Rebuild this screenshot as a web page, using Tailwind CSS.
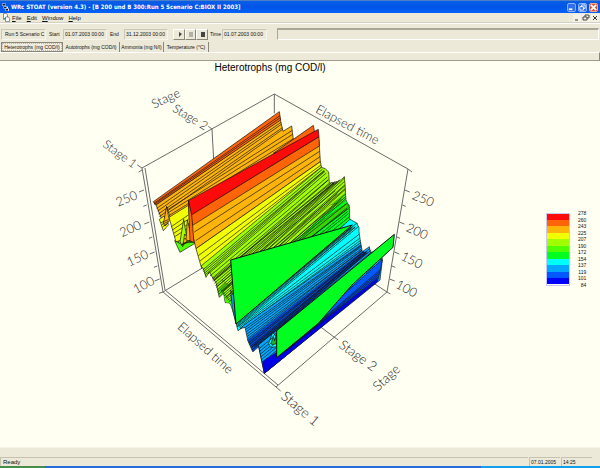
<!DOCTYPE html>
<html lang="en">
<head>
    <meta charset="UTF-8">
    <meta name="viewport" content="width=device-width, initial-scale=1.0">
    <title>WRc STOAT (version 4.3)</title>
    <script src="https://cdn.jsdelivr.net/npm/@tailwindcss/browser@4"></script>
</head>
<body class="h-screen flex flex-col overflow-hidden bg-[#ece9d8] font-['Liberation_Sans',sans-serif] text-[5px] leading-[8px] text-[#111]">

    <!-- Title bar -->
    <header class="h-[13px] shrink-0 flex items-center gap-[2px] px-[2px] border-t border-[#4d7fc4] bg-linear-to-b from-[#0a5fe8] via-[#0054e6] to-[#0862fa]">
        <svg class="w-[7px] h-[8px]" viewBox="0 0 14 16">
            <path d="M0 1h8v5H0z" fill="#ddd"/><path d="M1 2h6v3H1z" fill="#123"/>
            <path d="M3 7h9v4H3z" fill="#f4f4f4"/><path d="M4 8h5v2H4z" fill="#222"/>
            <path d="M7 11h7v5H7z" fill="#ddd"/><path d="M8 12h4v3H8z" fill="#111"/>
        </svg>
        <h1 class="flex-1 font-['DejaVu_Sans_Condensed','Open_Sans',sans-serif] font-bold text-[6px] text-white whitespace-nowrap">WRc STOAT (version 4.3) - [B 200 und B 300:Run 5 Scenario C:BIOX II 2003]</h1>
        <div class="flex gap-[2px]">
            <button type="button" aria-label="Minimize" class="w-[9px] h-[9px] rounded-xs border border-[#8fb4f5] bg-[#2f6ff0]">
                <svg class="w-full h-full" viewBox="0 0 8 8"><path d="M1 6h4" stroke="#fff" stroke-width="2"/></svg>
            </button>
            <button type="button" aria-label="Restore" class="w-[9px] h-[9px] rounded-xs border border-[#8fb4f5] bg-[#2f6ff0]">
                <svg class="w-full h-full" viewBox="0 0 8 8" fill="none" stroke="#fff"><path d="M3 3V1h4v4H5M1 3h4v4H1z"/></svg>
            </button>
            <button type="button" aria-label="Close" class="w-[9px] h-[9px] rounded-xs border border-[#f0a890] bg-[#e2532a]">
                <svg class="w-full h-full" viewBox="0 0 8 8"><path d="M1 1l6 6M7 1L1 7" stroke="#fff" stroke-width="2"/></svg>
            </button>
        </div>
    </header>

    <!-- Menu -->
    <nav class="h-[10px] shrink-0 flex items-center gap-[5px] pl-[3px] pr-[1px] border-b border-[#d6d2c2] text-[6px]">
        <svg class="w-[7px] h-[9px] -mr-[3px]" viewBox="0 0 14 18" fill="#fff" stroke="#333">
            <path d="M1 1h6l2 3v7H1z"/><path d="M5 8h6l2 3v6H5z"/><path d="M0 12h5" stroke="#0a8a8a" stroke-width="2"/>
        </svg>
        <a href="#"><u>F</u>ile</a>
        <a href="#"><u>E</u>dit</a>
        <a href="#"><u>W</u>indow</a>
        <a href="#"><u>H</u>elp</a>
        <div class="ml-auto flex gap-[1px]">
            <button type="button" aria-label="Minimize document" class="w-[8px] h-[8px] bg-[#f4f2e8]"><svg class="w-full h-full" viewBox="0 0 8 8"><path d="M2 6h3" stroke="#333"/></svg></button>
            <button type="button" aria-label="Restore document" class="w-[8px] h-[8px] bg-[#f4f2e8]"><svg class="w-full h-full" viewBox="0 0 8 8" fill="none" stroke="#444"><path d="M3 3V1h4v3H5M1 3h4v3H1z"/></svg></button>
            <button type="button" aria-label="Close document" class="w-[8px] h-[8px] bg-[#f4f2e8]"><svg class="w-full h-full" viewBox="0 0 8 8"><path d="M2 2l4 4M6 2L2 6" stroke="#333"/></svg></button>
        </div>
    </nav>

    <!-- Toolbar -->
    <form class="h-[19px] shrink-0 flex items-center pt-[2px] pl-[1px] pr-[1px] border-t border-white">
        <input aria-label="Run" readonly value="Run 5 Scenario C" class="w-[45px] h-[11px] pl-[3px] border border-[#cbc8b8] border-r-[#f8f6ec] border-b-[#f8f6ec]">
        <label for="start" class="ml-[3px] w-[14px]">Start</label>
        <input id="start" readonly value="01.07.2003 00:00" class="w-[44px] h-[11px] pl-px border border-[#cbc8b8] border-r-[#f8f6ec] border-b-[#f8f6ec]">
        <label for="end" class="ml-[3px] w-[14px]">End</label>
        <input id="end" readonly value="31.12.2003 00:00" class="w-[44px] h-[11px] pl-px border border-[#cbc8b8] border-r-[#f8f6ec] border-b-[#f8f6ec]">
        <div class="ml-[5px] flex">
            <button type="button" aria-label="Play" class="w-[12px] h-[11px] border border-white border-r-[#8a8778] border-b-[#8a8778]"><svg class="w-full h-full" viewBox="0 0 10 9"><path d="M5 2l3 2-3 3z" fill="#444"/></svg></button>
            <button type="button" aria-label="Pause" class="w-[11px] h-[11px] border border-white border-r-[#8a8778] border-b-[#8a8778]"><svg class="w-full h-full" viewBox="0 0 9 9"><path d="M4 2v5M6 2v5" stroke="#777"/></svg></button>
            <button type="button" aria-label="Stop" class="w-[12px] h-[11px] border border-white border-r-[#8a8778] border-b-[#8a8778]"><svg class="w-full h-full" viewBox="0 0 10 9"><path d="M4 2h4v5H4z" fill="#444"/></svg></button>
        </div>
        <label for="time" class="ml-[2px] w-[12px]">Time</label>
        <input id="time" readonly value="01.07.2003 00:00" class="w-[45px] h-[11px] pl-px border border-[#cbc8b8] border-r-[#f8f6ec] border-b-[#f8f6ec]">
        <div class="ml-[10px] flex-1 h-[12px] border border-t-2 border-[#aaa798] border-r-white border-b-white"></div>
    </form>

    <!-- Tabs -->
    <div role="tablist" class="h-[10px] shrink-0 flex items-stretch pl-[1px] whitespace-nowrap">
        <button type="button" role="tab" aria-selected="true" class="w-[62px] bg-[#f0eddf] border border-[#8a8778] outline-1 -outline-offset-2 outline-dotted outline-[#bbb]">Heterotrophs (mg COD/l)</button>
        <button type="button" role="tab" class="w-[57px] border-r border-[#8a8778]">Autotrophs (mg COD/l)</button>
        <button type="button" role="tab" class="w-[44px] border-r border-[#8a8778]">Ammonia (mg N/l)</button>
        <button type="button" role="tab" class="w-[45px] border-r border-[#8a8778]">Temperature (°C)</button>
    </div>
    <div class="h-[9px] shrink-0 border-t border-white border-r border-r-[#8a8778] border-b border-b-[#a09d8e]"></div>

    <!-- Chart -->
    <main class="flex-1 min-h-0 flex bg-[#fffff2]">
        <figure class="flex-1 min-w-0 flex flex-col">
            <figcaption class="h-[17px] shrink-0 text-center text-[10px] leading-[14px] text-black">Heterotrophs (mg COD/l)</figcaption>
            <svg class="flex-1 min-h-0 w-full" viewBox="-450 -36 1620 1107" role="img" aria-label="Heterotrophs by stage and elapsed time">
                <g fill="none" stroke="#6a6a6a" stroke-width="3">
                    <path d="M-24 234L373 12L774 237L711 606L378 891L39 606z"/>
                    <path d="M-15 234L45 600L384 885"/>
                    <path d="M373 12V70M186 117L191 210M39 606L160 532M670 579L711 606M508 708L552 741"/>
                    <path d="M186 117l-11-8M-24 234l-14-9M-24 240l-10 6M774 237l12 9M711 606l10 6M39 606l-12 4M378 891l14 12M552 741l13 9"/>
                    <path d="M-18 300l-15 6M-10 345l-10 4M-2 396l-15 6M7 441l-10 4M14 486l-15 6M22 528l-10 4M29 567l-15 6"/>
                    <path d="M764 300l15 6M757 345l10 4M748 396l15 6M740 441l10 4M733 486l15 6M726 528l10 4M719 567l15 6"/>
                </g>
                <g id="surface" stroke="#111" stroke-linejoin="round"></g>
                <g fill="#222" font-family="Lato, sans-serif" font-weight="300" font-size="38">
                    <text transform="translate(12 56) rotate(-25)">Stage</text>
                    <text transform="translate(65 62) rotate(31)" font-size="36">Stage 2</text>
                    <text transform="translate(-144 168) rotate(36)" font-size="36">Stage 1</text>
                    <text transform="translate(494 66) rotate(28)">Elapsed time</text>
                    <text transform="translate(-96 350) rotate(-22)">250</text>
                    <text transform="translate(-84 442) rotate(-24)">200</text>
                    <text transform="translate(-62 530) rotate(-25)">150</text>
                    <text transform="translate(-42 612) rotate(-28)">100</text>
                    <text transform="translate(784 326) rotate(22)">250</text>
                    <text transform="translate(766 422) rotate(24)">200</text>
                    <text transform="translate(750 508) rotate(26)">150</text>
                    <text transform="translate(734 592) rotate(28)">100</text>
                    <text transform="translate(80 713) rotate(42)">Elapsed time</text>
                    <text transform="translate(390 923) rotate(40)" font-size="42">Stage 1</text>
                    <text transform="translate(564 770) rotate(36)" font-size="40">Stage 2</text>
                    <text transform="translate(684 905) rotate(-43)" font-size="40">Stage</text>
                </g>
            </svg>
        </figure>
        <!-- Legend -->
        <aside class="w-[60px] shrink-0 self-center flex items-center gap-[8px] pl-[6px] pb-[10px]">
            <div class="w-[24px] h-[73px] flex flex-col border border-[#c9c9f0]">
                <i class="flex-1 bg-[#ff0a0a]"></i>
                <i class="flex-1 bg-[#ff6408]"></i>
                <i class="flex-1 bg-[#ffb40a]"></i>
                <i class="flex-1 bg-[#f2ff00]"></i>
                <i class="flex-1 bg-[#a0ff00]"></i>
                <i class="flex-1 bg-[#50ff00]"></i>
                <i class="flex-1 bg-[#00ff20]"></i>
                <i class="flex-1 bg-[#00ffff]"></i>
                <i class="flex-1 bg-[#00a8ff]"></i>
                <i class="flex-1 bg-[#0058ff]"></i>
                <i class="flex-1 bg-[#0000ff]"></i>
            </div>
            <ul class="h-[78px] flex flex-col justify-between leading-[6px] text-right">
                <li>278</li><li>260</li><li>243</li><li>225</li><li>207</li><li>190</li>
                <li>172</li><li>154</li><li>137</li><li>119</li><li>101</li><li>84</li>
            </ul>
        </aside>
    </main>

    <!-- Status bar -->
    <footer class="shrink-0 pt-[9px] border-t border-[#f6f4ea] text-[6px]">
        <div class="h-[9px] flex gap-[1px] pr-[8px] whitespace-nowrap">
            <span class="flex-1 pl-[2px] border-t border-l border-[#c5c2b2]">Ready</span>
            <span class="w-[31px] pl-[1px] border-t border-l border-[#c5c2b2] text-[5px]">07.01.2005</span>
            <span class="w-[31px] pl-[1px] border-t border-l border-[#c5c2b2] text-[5px]">14:25</span>
        </div>
        <div class="h-[2px] flex">
            <i class="w-[45px] bg-[#4a8a4a]"></i>
            <i class="flex-1 bg-[#2a6ae0]"></i>
            <i class="w-[119px] bg-[#14a0f0]"></i>
        </div>
    </footer>

    <script>
const surface = document.getElementById('surface');
const NS = 'http://www.w3.org/2000/svg';

const C = {
    red: '#ff0a0a', deep: '#ff6408', orange: '#ffb40a', yellow: '#f2ff00', lime: '#a0ff00',
    leaf: '#50ff00', green: '#00ff20', cyan: '#00ffff', sky: '#00a8ff', blue: '#0058ff', navy: '#0000e6',
};

function add(tag, attrs) {
    const el = document.createElementNS(NS, tag);
    Object.entries(attrs).forEach(([k, v]) => el.setAttribute(k, v));
    surface.appendChild(el);
}

// filled face, points listed as x,y pairs
function face(points, fill, width = 2) {
    add('polygon', { points, fill, 'stroke-width': width });
}

let seed = 7;
function rnd() {
    seed = (seed * 16807) % 2147483647;
    return seed / 2147483647;
}

// ridge lines running from the left edge (a to b) to the right edge (c to d)
function ridges(a, b, c, d, n, jitter = 0, width = 2) {
    let path = '';
    for (let i = 1; i <= n; i++) {
        const t = i / (n + 1);
        const u = Math.min(1, Math.max(0, t + (rnd() - 0.5) * jitter));
        const at = (p, q, k) => Math.round(p[0] + (q[0] - p[0]) * k) + ' ' + Math.round(p[1] + (q[1] - p[1]) * k);
        path += 'M' + at(a, b, t) + 'L' + at(c, d, u);
    }
    add('path', { d: path, fill: 'none', 'stroke-width': width });
}

// back slopes
face('18,345 391,88 399,124 425,108 431,158 470,160 500,230 118,452 90,470 62,388 50,350 44,400 40,400', C.orange);
face('10,335 388,65 392,90 16,345', C.deep);
ridges([10, 337], [16, 345], [389, 70], [392, 90], 2);
ridges([18, 347], [30, 388], [392, 92], [399, 124], 4, 0.2);
ridges([50, 350], [60, 385], [425, 108], [431, 158], 3);
face('28,388 42,378 50,396 56,404 40,422', C.yellow);
face('57,382 115,346 120,400 120,440 78,456', C.yellow);
face('431,158 470,158 440,185 300,250 230,272', C.yellow, 1);
ridges([60, 400], [78, 450], [114, 362], [120, 425], 4);
face('74,452 90,487 135,460 125,436 100,466', C.leaf);
face('40,400 50,350 58,392 52,400 45,408', C.orange);
face('90,455 101,388 110,440 104,432 98,470', C.lime);
face('108,450 112,390 128,455', C.orange);
ridges([90, 470], [100, 455], [128, 440], [130, 462], 3);
ridges([30, 392], [40, 416], [54, 384], [56, 404], 3);
face('370,190 490,106 494,128 400,186', C.deep);

// red ridge and the slope below it
face('118,395 507,150 511,215 138,476', C.orange);
face('122,374 507,140 508,168 128,406', C.deep);
face('115,332 505,118 507,140 124,375', C.red);
face('115,332 125,375 132,458 120,452', C.deep);
ridges([130, 400], [140, 478], [508, 168], [511, 216], 2);
face('138,476 511,215 516,240 155,535', C.yellow);
ridges([140, 480], [155, 530], [511, 218], [516, 238], 2);

// middle slopes
face('153,528 514,232 526,236 536,246 538,280 548,277 552,290 583,260 588,335 597,345 600,410 258,700 247,655 238,636 226,638 222,608 208,622 198,578 186,560 178,545 168,562 160,536', C.lime);
face('205,600 552,290 583,262 588,335 597,345 600,410 258,690 240,640 226,638 220,608 208,620', C.leaf, 1);
face('215,570 548,285 583,262 586,310 242,590', C.lime, 1);
face('320,520 588,330 597,350 600,410 300,640', C.green, 1);
face('220,604 540,345 560,340 240,634', C.lime, 1);
face('400,475 590,340 598,354 430,480', '#36d600', 1);
ridges([155, 535], [168, 560], [515, 236], [526, 245], 4, 0.5);
ridges([168, 545], [198, 578], [526, 240], [538, 280], 4, 0.3);
ridges([186, 560], [208, 620], [542, 280], [583, 265], 8, 0.4);
ridges([208, 600], [240, 640], [583, 265], [588, 335], 8, 0.3);
ridges([238, 610], [258, 690], [590, 338], [600, 400], 8, 0.2);
ridges([175, 555], [240, 640], [538, 280], [590, 345], 4, 0.6);
face('242,600 247,655 258,700 252,620', C.sky);
face('560,424 600,388 622,400 607,420', C.cyan);

// peak in stage 1
face('258,700 607,410 620,400 627,412 627,425 632,460 264,722', C.cyan);
ridges([258, 690], [262, 714], [600, 412], [626, 410], 6, 0.3);
ridges([262, 706], [272, 718], [626, 425], [632, 460], 3, 0.2);
face('242,510 607,405 258,702', C.green, 3);

// lower slopes
face('270,716 285,703 632,458 637,485 658,470 662,490 670,485 697,505 680,574 343,850 325,765 308,785 293,750 285,712', C.sky);
face('293,750 637,484 650,490 310,785', '#0048c8', 1);
ridges([285, 705], [295, 752], [632, 460], [637, 484], 6, 0.4);
ridges([293, 752], [308, 785], [637, 484], [658, 486], 5, 0.3);
ridges([300, 770], [325, 768], [658, 472], [668, 486], 3, 0.3);
face('325,765 658,500 697,510 690,570 343,850', C.sky);
ridges([325, 768], [343, 850], [658, 500], [690, 570], 9);
face('356,760 368,728 376,735 380,770 362,772', C.cyan);
ridges([360, 740], [365, 780], [378, 722], [378, 765], 3, 0.3);
face('362,762 370,740 374,752 380,730 380,760 370,764', '#18b030');
face('352,822 697,508 690,545 682,574 343,850', C.blue);
face('337,815 380,786 420,770 681,566 683,574 343,850', C.navy, 1);
ridges([420, 770], [400, 790], [694, 530], [683, 568], 4);
face('380,722 733,433 729,472 606,585 540,660 505,700 380,803', C.green, 3);
    </script>
</body>
</html>
